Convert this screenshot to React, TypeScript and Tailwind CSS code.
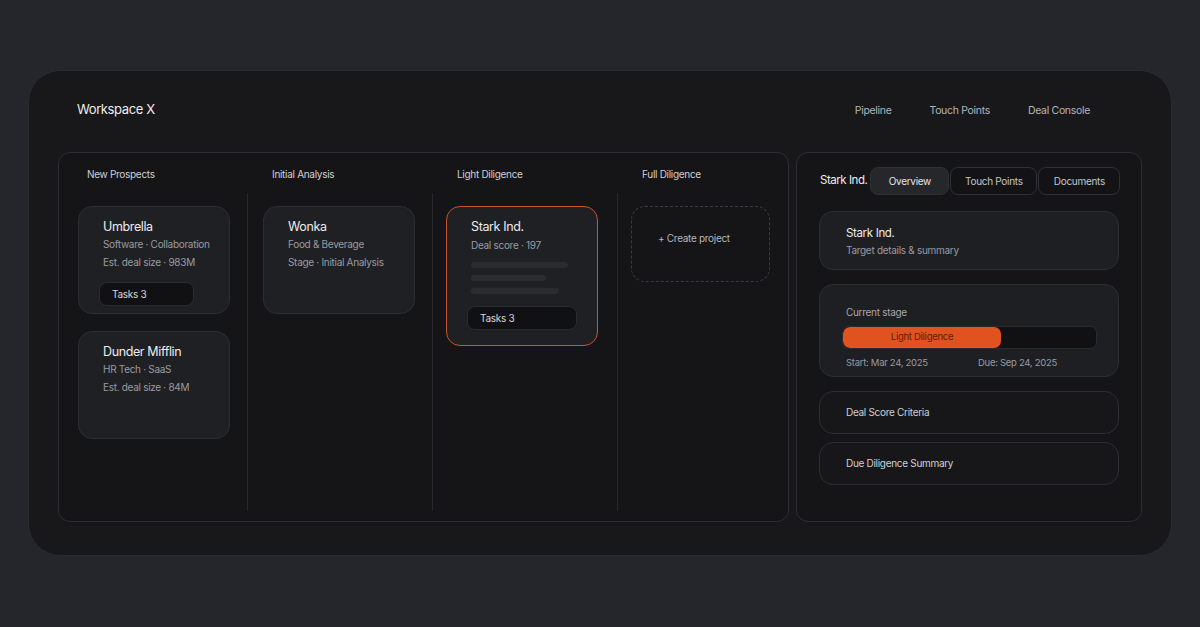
import React from 'react';

const font = { fontFamily: 'Inter, "Noto Sans", sans-serif' };

function Pill({ label, full }: { label: string; full?: boolean }) {
  return (
    <div
      className={`h-[24px] ${full ? 'mx-[20px]' : 'ml-[20px] w-[95px]'} rounded-[8px] border border-[#2a2b2f] bg-[#111114] flex items-center pl-[12px] text-[10px] text-[#d6d6da] tracking-[-0.03em]`}
    >
      {label}
    </div>
  );
}

function DealCard({ title, lines, tasks }: { title: string; lines: string[]; tasks?: string }) {
  return (
    <div className="w-[152px] h-[108px] rounded-[14px] border border-[#2c2d31] bg-[#1f2024] pt-[12px]">
      <div className="pl-[24px] text-[12.5px] leading-[15px] text-[#ececee] tracking-[-0.03em]">{title}</div>
      {lines.map((l) => (
        <div key={l} className="pl-[24px] mt-[3px] text-[10px] leading-[15px] text-[#9a9ba1] tracking-[-0.03em]">
          {l}
        </div>
      ))}
      {tasks && (
        <div className="mt-[12px]">
          <Pill label={tasks} />
        </div>
      )}
    </div>
  );
}

function Column({ title, first, children, pad = 'pl-[15px]' }: { title: string; first?: boolean; children?: React.ReactNode; pad?: string }) {
  return (
    <div className="w-[185px] shrink-0 flex flex-col">
      <div className="h-[40px] pt-[14px] pl-[25px] text-[10px] leading-[14px] text-[#cfd0d4] tracking-[-0.03em]">{title}</div>
      <div className={`flex-1 mb-[10px] pt-[13px] ${pad} flex flex-col gap-[17px] ${first ? '' : 'border-l border-[#26272b]'}`}>
        {children}
      </div>
    </div>
  );
}

export default function App() {
  return (
    <div className="w-[1200px] h-[627px] bg-[#25262b] pt-[70px] px-[28px] overflow-hidden" style={font}>
      <div className="h-[486px] rounded-[32px] bg-[#18181b] border border-[#2a2b2f] px-[29px]">
        <header className="h-[81px] flex items-start justify-between">
          <h1 className="pl-[19px] pt-[30px] text-[13px] leading-[16px] text-[#ededf0] tracking-[-0.03em]">Workspace X</h1>
          <nav className="pt-[33px] pr-[52px] flex gap-[38px] text-[10.5px] leading-[14px] text-[#b4b5ba] tracking-[-0.03em]">
            <span>Pipeline</span>
            <span>Touch Points</span>
            <span>Deal Console</span>
          </nav>
        </header>

        <div className="flex gap-[7px]">
          {/* pipeline board */}
          <div className="w-[731px] h-[370px] rounded-[12px] border border-[#2d2e33] bg-[#151518] pl-[3px] flex overflow-hidden">
            <Column title="New Prospects" first pad="pl-[16px]">
              <DealCard title="Umbrella" lines={['Software · Collaboration', 'Est. deal size · 983M']} tasks="Tasks 3" />
              <DealCard title="Dunder Mifflin" lines={['HR Tech · SaaS', 'Est. deal size · 84M']} />
            </Column>
            <Column title="Initial Analysis" pad="pl-[15px]">
              <DealCard title="Wonka" lines={['Food & Beverage', 'Stage · Initial Analysis']} />
            </Column>
            <Column title="Light Diligence" pad="pl-[13px]">
              <div className="w-[152px] h-[140px] rounded-[14px] border-[1.5px] border-[#c8542b] bg-[#1f2024] pt-[12px]">
                <div className="pl-[24px] text-[12.5px] leading-[15px] text-[#ececee] tracking-[-0.03em]">Stark Ind.</div>
                <div className="pl-[24px] mt-[4px] text-[10px] leading-[15px] text-[#9a9ba1] tracking-[-0.03em]">Deal score · 197</div>
                <div className="pl-[24px] mt-[9px] flex flex-col gap-[7px]">
                  <div className="h-[6px] w-[97px] rounded-full bg-[#2b2c30]" />
                  <div className="h-[6px] w-[75px] rounded-full bg-[#2b2c30]" />
                  <div className="h-[6px] w-[88px] rounded-full bg-[#2b2c30]" />
                </div>
                <div className="mt-[12px]">
                  <Pill label="Tasks 3" full />
                </div>
              </div>
            </Column>
            <Column title="Full Diligence" pad="pl-[13px]">
              <div className="w-[139px] h-[76px] rounded-[14px] border border-dashed border-[#3a3b40] pl-[26px] pt-[24px] text-[10px] leading-[14px] text-[#b4b5ba] tracking-[-0.03em]">
                + Create project
              </div>
            </Column>
          </div>

          {/* detail panel */}
          <div className="w-[346px] h-[370px] rounded-[12px] border border-[#2d2e33] bg-[#151518] px-[22px]">
            <div className="pt-[14px] flex items-center">
              <span className="pl-[1px] text-[11.5px] text-[#ececee] tracking-[-0.04em] mr-[3px] whitespace-nowrap">Stark Ind.</span>
              <div className="flex gap-[1px] text-[10px] tracking-[-0.03em] whitespace-nowrap">
                <button className="w-[79px] h-[28px] rounded-[8px] bg-[#26272b] border border-[#2f3035] text-[#e4e4e8]">Overview</button>
                <button className="w-[87px] h-[28px] rounded-[8px] bg-[#131316] border border-[#2f3035] text-[#c4c5ca]">Touch Points</button>
                <button className="w-[82px] h-[28px] rounded-[8px] bg-[#131316] border border-[#2f3035] text-[#c4c5ca]">Documents</button>
              </div>
            </div>

            <div className="mt-[16px] w-[300px] flex flex-col">
              <div className="h-[59px] rounded-[14px] border border-[#2c2d31] bg-[#1e1f23] pl-[26px] pt-[14px]">
                <div className="text-[11.5px] leading-[15px] text-[#ececee] tracking-[-0.03em]">Stark Ind.</div>
                <div className="mt-[2px] text-[10px] leading-[14px] text-[#9a9ba1] tracking-[-0.03em]">Target details &amp; summary</div>
              </div>

              <div className="mt-[14px] h-[93px] rounded-[14px] border border-[#2c2d31] bg-[#1e1f23] pt-[20px]">
                <div className="pl-[26px] text-[10px] leading-[14px] text-[#a6a7ac] tracking-[-0.03em]">Current stage</div>
                <div className="mt-[7px] ml-[22px] w-[255px] h-[23px] rounded-[7px] border border-[#2a2b2f] bg-[#111114] overflow-hidden">
                  <div className="w-[158px] h-full rounded-[7px] bg-[#e0521f] flex items-center justify-center text-[9.5px] text-[#5c1f0c] tracking-[-0.03em]">
                    Light Diligence
                  </div>
                </div>
                <div className="mt-[7px] pl-[26px] flex text-[9.5px] leading-[14px] text-[#9a9ba1] tracking-[-0.03em]">
                  <span className="w-[132px]">Start: Mar 24, 2025</span>
                  <span>Due: Sep 24, 2025</span>
                </div>
              </div>

              <div className="mt-[14px] h-[43px] rounded-[14px] border border-[#2c2d31] bg-[#17171a] pl-[26px] flex items-center text-[10px] text-[#cfd0d4] tracking-[-0.03em]">
                Deal Score Criteria
              </div>
              <div className="mt-[8px] h-[43px] rounded-[14px] border border-[#2c2d31] bg-[#17171a] pl-[26px] flex items-center text-[10px] text-[#cfd0d4] tracking-[-0.03em]">
                Due Diligence Summary
              </div>
            </div>
          </div>
        </div>
      </div>
    </div>
  );
}
